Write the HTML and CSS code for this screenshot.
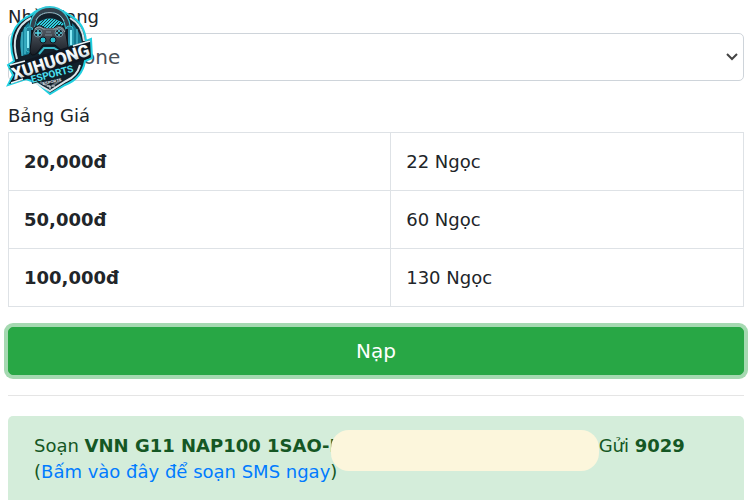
FILE: index.html
```html
<!DOCTYPE html>
<html lang="vi">
<head>
<meta charset="utf-8">
<meta name="viewport" content="width=device-width, initial-scale=1">
<title>Nạp Ngọc</title>
<link rel="stylesheet" href="styles.css">
</head>
<body>
<svg class="logo" viewBox="0 0 90 92" role="img" aria-label="Xuhuong Esports">
  <defs>
    <linearGradient id="steel" x1="0" y1="0" x2="0" y2="1">
      <stop offset="0" stop-color="#ffffff"/><stop offset=".6" stop-color="#f0f5f7"/><stop offset="1" stop-color="#a9bac3"/>
    </linearGradient>
    <linearGradient id="pad" x1="0" y1="0" x2="0" y2="1">
      <stop offset="0" stop-color="#59616a"/><stop offset="1" stop-color="#171c24"/>
    </linearGradient>
    <pattern id="mesh" width="3" height="3" patternUnits="userSpaceOnUse">
      <path d="M0 3 3 0" stroke="#173746" stroke-width="1"/>
    </pattern>
  </defs>
  <!-- shield and ring -->
  <path d="M44 3C54 3 60 7 64 10 74 15 80 24 81 36L86 34 87 53 80 56C78 68 70 76 60 80L45 89 32 78 21 74 3 80 8 70 3 60 9 56C2 34 8 18 26 10 31 5 37 3 44 3Z" fill="#12202b" stroke="#20cfe0" stroke-width="2"/>
  <path d="M26 13C10 21 7 37 12 54M65 13C74 18 78 26 79 36" fill="none" stroke="#d5e4e9" stroke-width="2"/>
  <path d="M24 17C15 25 13 38 17 51L24 49V16Z" fill="#127f98"/>
  <path d="M67 18C73 24 76 31 77 38L67 41Z" fill="#137790"/>
  <path d="M17 27V51M20 22V49M72 24V40" stroke="#5acede" stroke-width="1"/>
  <!-- headset -->
  <path d="M27 26C27 9 36 4 45 4 55 4 63 12 63 26" fill="none" stroke="#35c8d8" stroke-width="6"/>
  <path d="M27 27C27 10 36 5 45 5 55 5 63 12 63 26" fill="none" stroke="#34424e" stroke-width="4"/>
  <path d="M31 15C36 5 54 5 59 16" fill="none" stroke="#a2b4bf" stroke-width="1"/>
  <path d="M31 19Q45 8 59 19L56 23H33Z" fill="#2fd0de"/>
  <path d="M31 19Q45 8 59 19L56 23H33Z" fill="url(#mesh)"/>
  <rect x="21" y="22" width="7" height="25" rx="3" fill="#207f98" stroke="#35b7c9"/>
  <rect x="61" y="21" width="7" height="23" rx="3" fill="#207f98" stroke="#35b7c9"/>
  <path d="M23 26V43M66 25V40" stroke="#8aeaf5" stroke-width="2"/>
  <path d="M27 25V44M62 24V40" stroke="#111b25" stroke-width="2"/>
  <!-- controller -->
  <path d="M29 23Q34 19 38 22L41 24H48L51 21Q57 19 60 24L63 41Q63 48 57 46L50 40H38L32 48Q26 53 25 46L27 29Z" fill="url(#pad)" stroke="#0c1117" stroke-width="1"/>
  <path d="M30 24Q34 20 38 24H51Q56 20 60 27" fill="none" stroke="#a3adb3" stroke-width="1"/>
  <circle cx="33" cy="28" r="4" fill="#182934" stroke="#7494a1"/>
  <path d="M33 25V31M30 28H36" stroke="#58d6e6" stroke-width="1.5"/>
  <circle cx="54" cy="28" r="4" fill="#182934" stroke="#7494a1"/>
  <path d="M54 25V27M54 29V31M51 28H53M55 28H57" stroke="#58d6e6" stroke-width="1.5"/>
  <circle cx="38" cy="35" r="3" fill="#27bed0" stroke="#111720"/>
  <circle cx="48" cy="35" r="3" fill="#27bed0" stroke="#111720"/>
  <path d="M41 27H46M40 30H47" stroke="#778994"/>
  <path d="M34 49 39 43H49L54 46" fill="none" stroke="#3bbac9" stroke-width="2"/>
  <!-- lower shield -->
  <path d="M29 77 45 86 61 76C68 73 73 68 75 60" fill="none" stroke="#dce5ea" stroke-width="2"/>
  <path d="M35 77 45 82 56 75" fill="none" stroke="#64717c" stroke-width="2"/>
  <!-- wordmark -->
  <path d="M5 60 85 35V53L25 73 4 79 10 70Z" fill="#101721"/>
  <text class="logo-name" x="9" y="75" transform="rotate(-18 9 75)" fill="url(#steel)">XUHUONG</text>
  <path d="M5 60 20 56M6 78 18 74M68 41 85 36" stroke="#eaf6fa" stroke-width="1.5"/>
  <path d="M26 71 69 59 69 66 27 79Z" fill="#10202c"/>
  <text class="logo-sub" x="27" y="78" transform="rotate(-15 27 78)">ESPORTS</text>
  <text class="logo-tiny" x="38" y="80" transform="rotate(-12 38 80)">ESPORTS</text>
  <path d="M42 81H45V84M47 81H50" stroke="#dce5ea" fill="none"/>
</svg>
<main class="page">
  <form class="topup">
    <label for="network">Nhà Mạng</label>
    <div class="select-wrap">
      <select id="network"><option>Vinaphone</option></select>
      <svg class="chevron" viewBox="0 0 12 8" aria-hidden="true"><path d="M1 1 6 6 11 1"/></svg>
    </div>
    <h2>Bảng Giá</h2>
    <table>
      <tbody>
        <tr><th scope="row">20,000đ</th><td>22 Ngọc</td></tr>
        <tr><th scope="row">50,000đ</th><td>60 Ngọc</td></tr>
        <tr><th scope="row">100,000đ</th><td>130 Ngọc</td></tr>
      </tbody>
    </table>
    <button type="button">Nạp</button>
  </form>
  <hr>
  <div class="alert">
    Soạn <strong>VNN G11 NAP100 1SAO-N</strong><span class="redacted"></span>Gửi <strong>9029</strong><br>(<a href="#sms">Bấm vào đây để soạn SMS ngay</a>)
  </div>
</main>
</body>
</html>
```
FILE: styles.css
```css
* { box-sizing: border-box; }

body {
  margin: 0;
  background: #fff;
  color: #212529;
  font: 18px/26px Verdana, "DejaVu Sans", sans-serif;
  overflow: hidden;
}

.page { padding: 4px 6px 0 8px; }

label { display: block; margin-bottom: 3px; }

.select-wrap { position: relative; }

select {
  display: block;
  width: 100%;
  height: 48px;
  padding: 0 36px 0 5px;
  border: 1px solid #ced4da;
  border-radius: 5px;
  background: #fff;
  color: #495057;
  font: inherit;
  font-size: 20px;
  appearance: none;
}

.chevron {
  position: absolute;
  top: 20px;
  right: 6px;
  width: 12px;
  height: 8px;
  fill: none;
  stroke: #444;
  stroke-width: 2;
  pointer-events: none;
}

h2 {
  margin: 22px 0 3px;
  font-size: 18px;
  font-weight: 400;
}

table {
  width: 100%;
  border-collapse: collapse;
  table-layout: fixed;
}

th, td {
  height: 58px;
  padding: 0 15px;
  border: 1px solid #dee2e6;
  text-align: left;
}

th { width: 52%; }

button {
  display: block;
  width: 100%;
  height: 48px;
  margin-top: 20px;
  padding: 0;
  border: 1px solid #28a745;
  border-radius: 5px;
  background: #28a745;
  box-shadow: 0 0 0 4px #a5d9b1;
  color: #fff;
  font: inherit;
  font-size: 20px;
}

hr {
  margin: 20px 0;
  border: 0;
  border-top: 1px solid #e5e5e5;
}

.alert {
  padding: 17px 26px 26px;
  border-radius: 5px;
  background: #d4edda;
  color: #155724;
}

.alert a { color: #007bff; text-decoration: none; }

.redacted {
  display: inline-block;
  position: relative;
  width: 254px;
  height: 18px;
}

.redacted::before {
  content: "";
  position: absolute;
  top: -4px;
  right: 0;
  width: 268px;
  height: 41px;
  border-radius: 18px;
  background: #fcf6dc;
}

.logo {
  position: absolute;
  z-index: 1;
  top: 5px;
  left: 5px;
  width: 90px;
  height: 92px;
}

.logo-name {
  font: 900 17px Roboto, "Liberation Sans", sans-serif;
  stroke: #101721;
  stroke-width: 1px;
  paint-order: stroke;
}

.logo-sub {
  font: bold 10px Roboto, "Liberation Sans", sans-serif;
  fill: #4de0f2;
}

.logo-tiny {
  font: bold 4px "Liberation Sans", sans-serif;
  fill: #e2e9ed;
}
```
